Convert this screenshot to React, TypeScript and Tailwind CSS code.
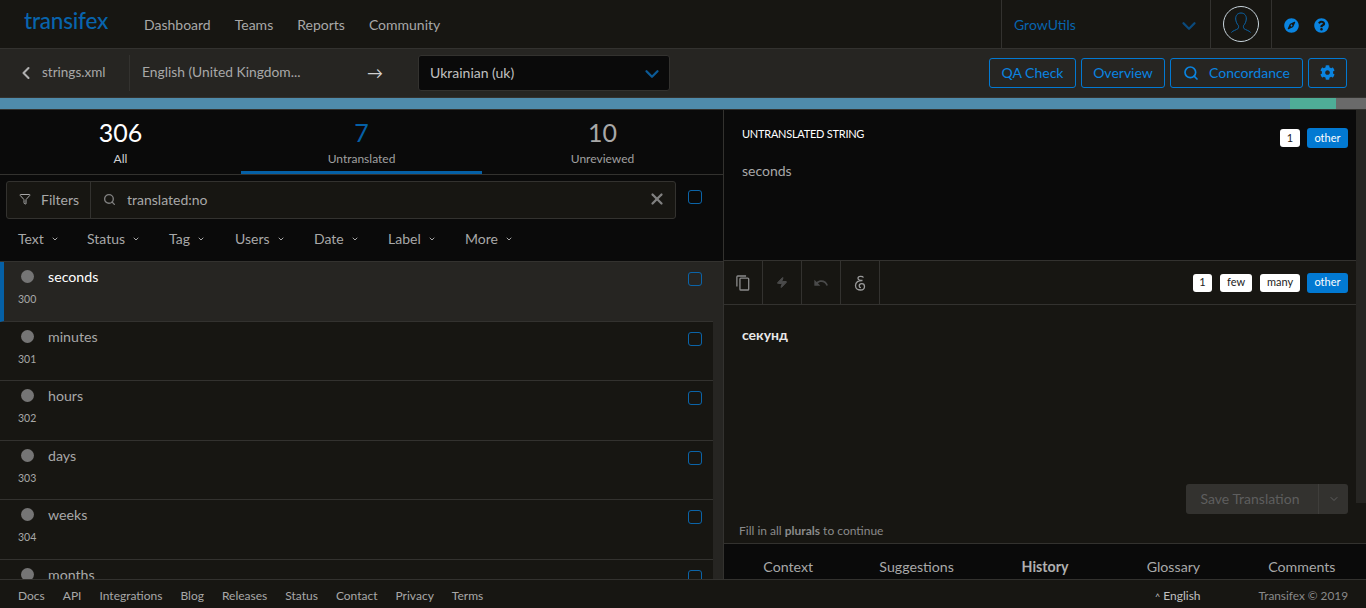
import { ChevronDown, ChevronLeft, Filter, Search, X, Zap } from 'lucide-react'
import { FaCog, FaCompass, FaQuestionCircle } from 'react-icons/fa'

const navLinks = ['Dashboard', 'Teams', 'Reports', 'Community']
const filterMenus = [
  { label: 'Text', w: 'w-[69px]' },
  { label: 'Status', w: 'w-[82px]' },
  { label: 'Tag', w: 'w-[66px]' },
  { label: 'Users', w: 'w-[79px]' },
  { label: 'Date', w: 'w-[74px]' },
  { label: 'Label', w: 'w-[77px]' },
  { label: 'More', w: 'w-[60px]' },
]
const strings = [
  { text: 'seconds', id: '300' },
  { text: 'minutes', id: '301' },
  { text: 'hours', id: '302' },
  { text: 'days', id: '303' },
  { text: 'weeks', id: '304' },
  { text: 'months', id: '' },
]
const footerLinks = ['Docs', 'API', 'Integrations', 'Blog', 'Releases', 'Status', 'Contact', 'Privacy', 'Terms']
const detailTabs = ['Context', 'Suggestions', 'History', 'Glossary', 'Comments']

function Checkbox({ className = '' }: { className?: string }) {
  return <div className={`w-[14px] h-[14px] rounded-[3px] border border-[#0b64a8] ${className}`} />
}

function Pill({ label, active, w }: { label: string; active?: boolean; w: string }) {
  return (
    <span className={`${w} flex items-center justify-center rounded-[3px] text-[11px] ${active ? 'bg-[#0279d2] text-white h-[20px]' : 'bg-white text-[#222] h-[18px]'}`}>
      {label}
    </span>
  )
}

function OutlineButton({ children, w }: { children: React.ReactNode; w: string }) {
  return (
    <button className={`${w} h-[30px] flex items-center justify-center gap-[10px] rounded-[3px] border border-[#0279d2] text-[#0a84e0] text-[14px]`}>
      {children}
    </button>
  )
}

function Stat({ count, label, active, strong }: { count: string; label: string; active?: boolean; strong?: boolean }) {
  return (
    <div className={`flex-1 h-[64px] flex flex-col items-center pt-[7px] ${active ? 'border-b-[3px] border-[#0560a6]' : ''}`}>
      <span className={`text-[25px] leading-[30px] ${active ? 'text-[#0560a6]' : strong ? 'text-white' : 'text-[#a8a8a8]'}`}>{count}</span>
      <span className={`text-[12px] leading-[18px] mt-[3px] ${strong ? 'text-[#d0d0d0]' : 'text-[#a0a0a0]'}`}>{label}</span>
    </div>
  )
}

function ToolCell({ children }: { children: React.ReactNode }) {
  return <div className="w-[39px] h-full flex items-center justify-center border-r border-[#33322f]">{children}</div>
}

export default function App() {
  return (
    <div className="h-screen w-full flex flex-col overflow-hidden bg-[#171612] text-[#a8a8a8]" style={{ fontFamily: 'Lato, "Liberation Sans", sans-serif' }}>
      {/* top nav */}
      <header className="h-[49px] shrink-0 flex border-b border-[#33322f] bg-[#171612]">
        <div className="w-[144px] pl-[24px] pt-[8px] text-[#0864ad] text-[22.5px] leading-[26px] font-medium tracking-[-0.2px]">transifex</div>
        <nav className="flex-1 flex items-center gap-[24px] text-[14px] text-[#a8a8a8]">
          {navLinks.map((item) => (
            <a key={item} href="#">{item}</a>
          ))}
        </nav>
        <div className="w-[209px] border-l border-[#33322f] flex items-center justify-between pl-[12px] pr-[10px] text-[#0864ad] text-[14px]">
          <span>GrowUtils</span>
          <ChevronDown className="w-[22px] h-[22px] text-[#0b4a7c] mt-[3px]" strokeWidth={2.5} />
        </div>
        <div className="w-[61px] border-l border-[#33322f] flex items-center justify-center">
          <div className="w-[36px] h-[36px] rounded-full border-[1.5px] border-[#c8d4dc] flex items-center justify-center overflow-hidden">
            <svg viewBox="0 0 24 28" className="w-[24px] h-[28px] fill-none stroke-[#0b64a8]" strokeWidth="1">
              <path d="M12 3c-3.500 0-5.500 2.600-5.300 6 .2 2.800 1.300 5 2.700 6.500.4 1.200.2 2.500-.5 3.200-1.500 1.300-5 1.800-6.500 3.800M12 3c3.500 0 5.500 2.600 5.300 6-.2 2.800-1.300 5-2.700 6.500-.4 1.200-.2 2.500.5 3.200 1.500 1.300 5 1.800 6.500 3.800" />
            </svg>
          </div>
        </div>
        <div className="w-[95px] border-l border-[#33322f] flex items-center gap-[15px] pl-[12px] text-[#0a84e0] pt-[3px]">
          <FaCompass className="w-[15px] h-[15px]" />
          <FaQuestionCircle className="w-[15px] h-[15px]" />
        </div>
      </header>

      {/* file + language bar */}
      <div className="h-[49px] shrink-0 flex items-center bg-[#262522] border-b border-[#33322f] pb-[1px]">
        <ChevronLeft className="ml-[16px] w-[20px] h-[20px] text-[#b0b0b0]" strokeWidth={2.5} />
        <span className="ml-[6px] w-[87px] text-[13.5px]">strings.xml</span>
        <div className="w-px h-[36px] bg-[#33322f]" />
        <span className="ml-[12px] w-[225px] text-[13.8px]">English (United Kingdom...</span>
        <span className="w-[51px] text-[#d0d0d0] text-[16px]">→</span>
        <div className="w-[252px] h-[36px] rounded-[3px] bg-[#0a0a0a] border border-[#33322f] flex items-center justify-between pl-[11px] pr-[6px] text-[#c0c0c0] text-[14px]">
          <span>Ukrainian (uk)</span>
          <ChevronDown className="w-[22px] h-[22px] text-[#0b5a96] mt-[2px]" strokeWidth={2.5} />
        </div>
        <div className="ml-auto mr-[19px] flex gap-[5px]">
          <OutlineButton w="w-[87px]">QA Check</OutlineButton>
          <OutlineButton w="w-[84px]">Overview</OutlineButton>
          <OutlineButton w="w-[133px]">
            <Search className="w-[16px] h-[16px]" strokeWidth={2.5} />
            Concordance
          </OutlineButton>
          <OutlineButton w="w-[39px]">
            <FaCog className="w-[15px] h-[15px]" />
          </OutlineButton>
        </div>
      </div>

      {/* progress */}
      <div className="h-[12px] shrink-0 flex border-b border-[#33322f]">
        <div className="flex-1 bg-[#4f8bab]" />
        <div className="w-[46px] bg-[#4fad97]" />
        <div className="w-[30px] bg-[#6a6a6a]" />
      </div>

      <main className="flex-1 min-h-0 flex">
        {/* left column */}
        <section className="w-[723px] shrink-0 flex flex-col bg-[#0a0a0a]">
          <div className="flex border-b border-[#33322f] h-[65px] shrink-0">
            <Stat count="306" label="All" strong />
            <Stat count="7" label="Untranslated" active />
            <Stat count="10" label="Unreviewed" />
          </div>
          <div className="flex pl-[6px] pt-[6px] h-[45px] shrink-0">
            <div className="w-[670px] h-[38px] flex items-center bg-[#171612] border border-[#33322f] rounded-[3px] pb-[2px]">
              <div className="w-[84px] h-[36px] -mb-[2px] pb-[2px] flex items-center pl-[12px] gap-[10px] border-r border-[#33322f] text-[14px]">
                <Filter className="w-[12px] h-[12px]" />
                Filters
              </div>
              <Search className="ml-[12px] w-[13px] h-[13px] text-[#808080]" strokeWidth={2.5} />
              <span className="ml-[11px] text-[14px] flex-1">translated:no</span>
              <X className="mr-[9px] w-[18px] h-[18px] text-[#808080]" strokeWidth={3} />
            </div>
            <Checkbox className="ml-[12px] mt-[9px]" />
          </div>
          <div className="flex pl-[18px] h-[41px] shrink-0 items-center text-[14px] pb-[4px]">
            {filterMenus.map((m) => (
              <div key={m.label} className={`${m.w} flex items-center gap-[7px]`}>
                {m.label}
                <ChevronDown className="w-[8px] h-[8px]" strokeWidth={3} />
              </div>
            ))}
          </div>
          <div className="flex-1 min-h-0 flex border-t border-[#33322f]">
            <div className="flex-1 overflow-hidden bg-[#171612]">
              {strings.map((s, i) => (
                <div key={s.text} className={`h-[59.5px] border-b border-[#33322f] ${i === 0 ? 'bg-[#262522] border-l-[4px] border-l-[#0560a6]' : ''}`}>
                  <div className={`pt-[8px] pr-[11px] flex items-start ${i === 0 ? 'pl-[17px]' : 'pl-[21px]'}`}>
                    <span className="w-[13px] h-[13px] rounded-full bg-[#757575]" />
                    <span className={`ml-[14px] -mt-[1px] flex-1 text-[14.2px] leading-[15px] ${i === 0 ? 'text-white' : 'text-[#a8a8a8]'}`}>{s.text}</span>
                    <Checkbox className="mt-[2px]" />
                  </div>
                  <span className={`block mt-[7px] text-[10.5px] leading-[12px] ${i === 0 ? 'ml-[14px]' : 'ml-[18px]'}`}>{s.id}</span>
                </div>
              ))}
            </div>
            <div className="w-[10px] shrink-0 bg-[#262522]" />
          </div>
        </section>

        {/* right column */}
        <section className="flex-1 min-w-0 flex flex-col border-l border-[#33322f]">
          <div className="flex-1 min-h-0 flex">
            <div className="flex-1 min-w-0 flex flex-col">
              <div className="h-[151px] shrink-0 bg-[#0a0a0a] relative pl-[18px] pr-[8px] pt-[17px] border-b border-[#33322f]">
                <div className="text-[11px] leading-[13px] text-white tracking-[-0.25px]">UNTRANSLATED STRING</div>
                <div className="mt-[22px] text-[14px] leading-[18px]">seconds</div>
                <div className="absolute right-[8px] top-[18px] flex items-center gap-[7px]">
                  <Pill label="1" w="w-[20px]" />
                  <Pill label="other" active w="w-[41px]" />
                </div>
              </div>
              <div className="h-[44px] shrink-0 flex items-center border-b border-[#33322f] pr-[8px]">
                <ToolCell>
                  <svg viewBox="0 0 16 18" className="w-[14px] h-[16px] fill-none stroke-[#8a8a8a]" strokeWidth="1.5">
                    <rect x="4.500" y="3.500" width="10" height="13.500" rx="1" />
                    <path d="M11.500 1H2a1 1 0 0 0-1 1v11" />
                  </svg>
                </ToolCell>
                <ToolCell>
                  <Zap className="w-[12px] h-[13px] fill-[#4a4a4a] text-[#4a4a4a]" />
                </ToolCell>
                <ToolCell>
                  <svg viewBox="0 0 24 24" className="w-[16px] h-[16px] fill-[#4a4a4a]">
                    <path d="M12.500 8c-2.650 0-5.050.99-6.900 2.600L2 7v9h9l-3.620-3.620c1.390-1.160 3.160-1.880 5.120-1.880 3.540 0 6.550 2.310 7.600 5.500l2.370-.78C21.080 11.030 17.150 8 12.500 8z" />
                  </svg>
                </ToolCell>
                <ToolCell>
                  <svg viewBox="0 0 12 16" className="w-[12px] h-[16px] fill-none stroke-[#9a9a9a]" strokeWidth="1.300">
                    <path d="M9.500 2.500C8.500 1 4 .8 4 3.200c0 1.800 2.500 2.300 4.500 2.300M8.500 5.500C4.500 5.300 1.500 7 1.500 10.500c0 3 2.500 4.500 5 4.500s4-1.500 4-3.500c0-1.800-1.300-2.800-2.800-2.800-1.500 0-2.500 1-2.500 2.200 0 1 .8 1.800 1.800 1.800" />
                  </svg>
                </ToolCell>
                <div className="ml-auto flex items-center">
                  <Pill label="1" w="w-[19px] mr-[8px]" />
                  <Pill label="few" w="w-[32px] mr-[8px]" />
                  <Pill label="many" w="w-[40px] mr-[7px]" />
                  <Pill label="other" active w="w-[41px]" />
                </div>
              </div>
              <div className="flex-1 min-h-0 relative pl-[18px] pt-[21px]">
                <div className="text-[14px] leading-[18px] font-bold text-[#e8e8e8]">секунд</div>
                <div className="absolute right-[8px] bottom-[29px] w-[162px] h-[30px] flex rounded-[3px] bg-[#33322f] text-[#5e5e5e] text-[14px]">
                  <span className="flex-1 flex items-center justify-center border-r border-[#3f3e3b] pr-[4px] pb-[1px]">Save Translation</span>
                  <span className="w-[29px] flex items-center justify-center">
                    <ChevronDown className="w-[12px] h-[12px]" />
                  </span>
                </div>
                <div className="absolute left-[15px] bottom-[4px] text-[12px] leading-[16px] text-[#8a8a8a]">
                  Fill in all <b>plurals</b> to continue
                </div>
              </div>
            </div>
            <div className="w-[10px] shrink-0 bg-[#171612]">
              <div className="h-[393px] bg-[#262522]" />
            </div>
          </div>
          <div className="h-[36px] shrink-0 bg-[#0a0a0a] flex">
            <div className="flex-1 flex border-t border-[#33322f]">
              {detailTabs.map((t) => (
                <span key={t} className={`flex-1 text-center pt-[15px] text-[14.2px] leading-[16px] ${t === 'History' ? 'font-bold text-[#b0b0b0]' : ''}`}>{t}</span>
              ))}
            </div>
          </div>
        </section>
      </main>

      <footer className="h-[29px] shrink-0 flex items-center justify-between pl-[18px] pr-[18px] pt-[3px] border-t border-[#33322f] bg-[#171612] text-[12px]">
        <div className="flex gap-[18px]">
          {footerLinks.map((l) => (
            <a key={l} href="#">{l}</a>
          ))}
        </div>
        <div className="flex items-center">
          <span className="text-[#c0c0c0]"><span className="text-[9px] mr-[3px]">^</span>English</span>
          <span className="ml-[58px] text-[11.8px] text-[#8a8a8a]">Transifex © 2019</span>
        </div>
      </footer>
    </div>
  )
}
